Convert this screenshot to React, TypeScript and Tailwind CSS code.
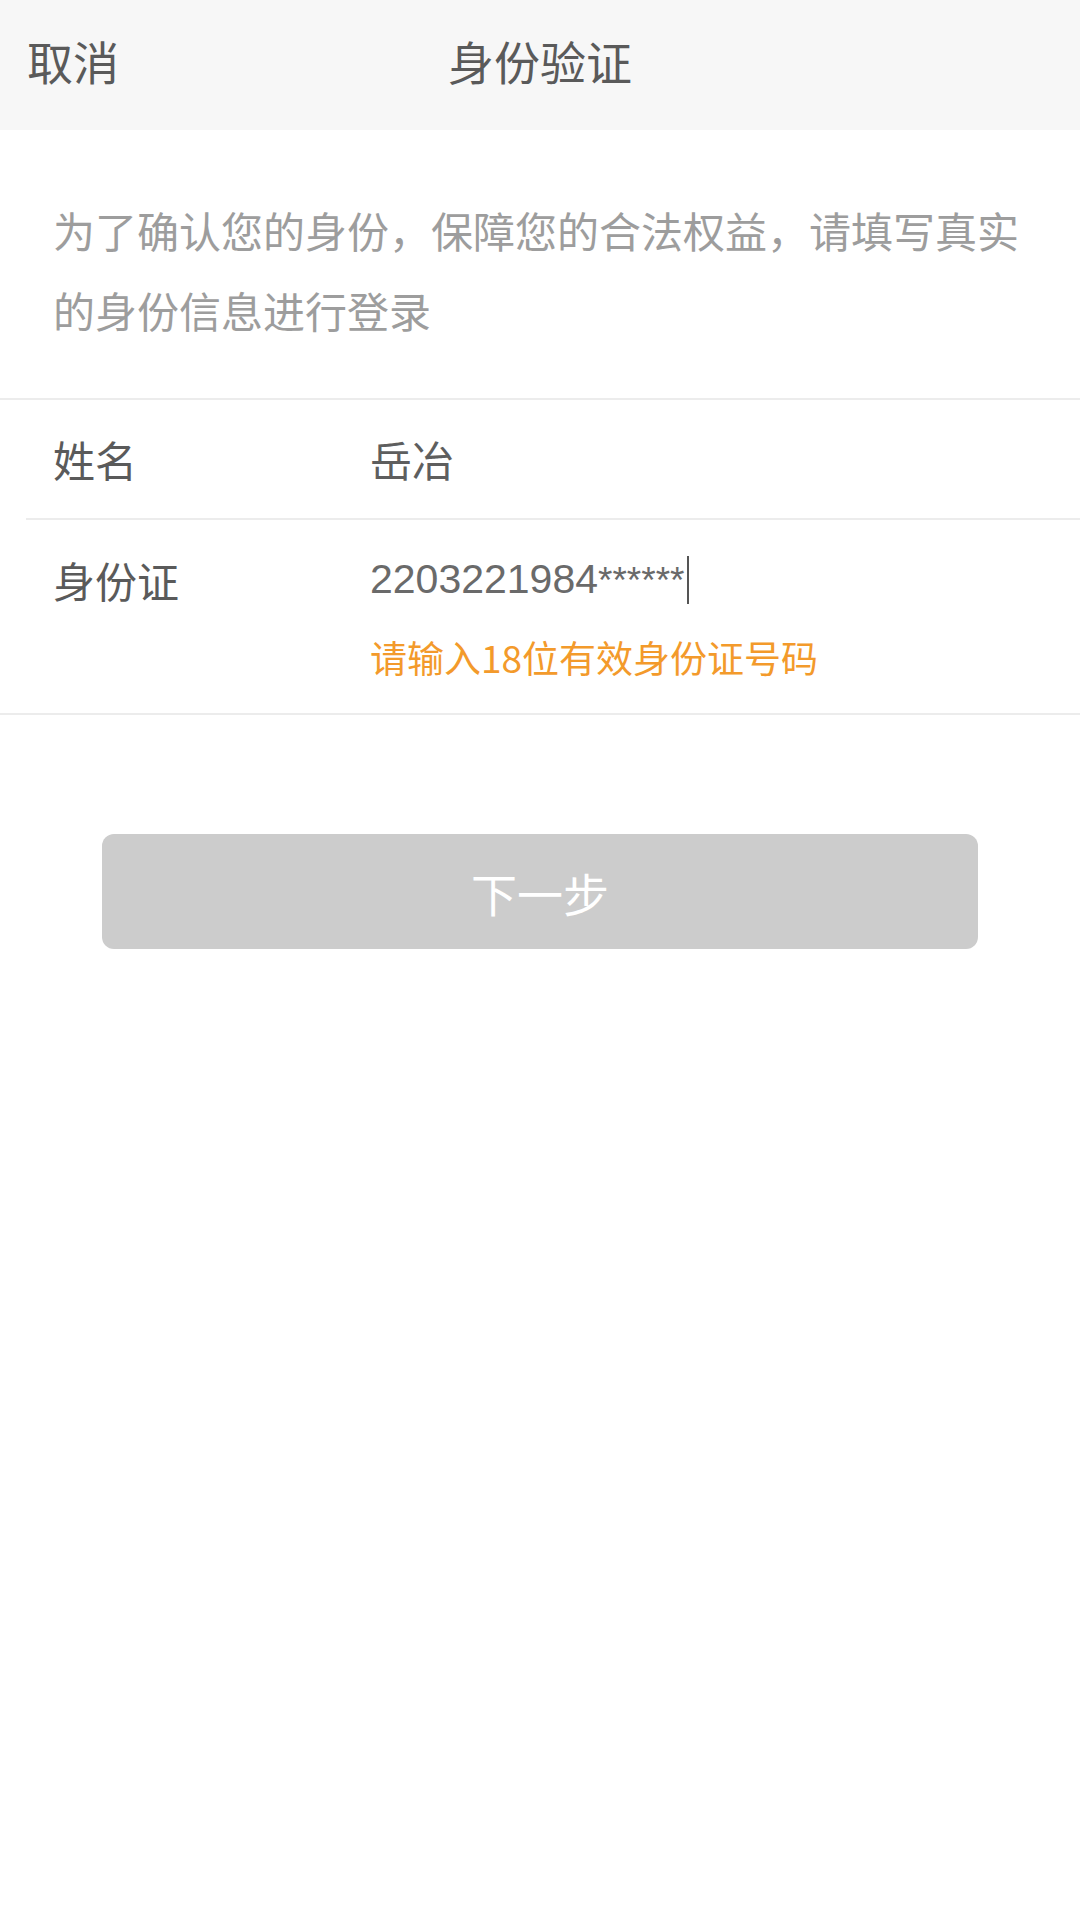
import React from "react";

const cjk = { fontFamily: '"Noto Sans CJK SC", "Noto Sans", sans-serif' };
const num = { fontFamily: '"Liberation Sans", "Noto Sans CJK SC", sans-serif' };

export default function App() {
  return (
    <div className="w-[1080px] min-h-[1920px] bg-white flex flex-col" style={cjk}>
      {/* Header */}
      <div className="relative h-[130px] bg-[#f7f7f7] flex items-center pb-[10px]">
        <span className="pl-[27px] text-[46px] leading-[56px] text-[#5a5a5a]">取消</span>
        <span className="absolute left-0 right-0 top-0 bottom-0 flex items-center justify-center pb-[10px] pointer-events-none">
          <span className="text-[46px] leading-[56px] text-[#5a5a5a]">身份验证</span>
        </span>
      </div>

      {/* Intro */}
      <div className="pt-[60px] pb-[48px] px-[53px]">
        <p className="text-[42px] leading-[80px] text-[#9d9d9d]">
          为了确认您的身份，保障您的合法权益，请填写真实的身份信息进行登录
        </p>
      </div>

      <div className="h-[2px] bg-[#ececec]" />

      {/* Name row */}
      <div className="h-[118px] flex items-center pl-[53px]">
        <span className="w-[317px] text-[42px] leading-[48px] text-[#5a5a5a]">姓名</span>
        <span className="text-[42px] leading-[48px] text-[#5e5e5e]">岳冶</span>
      </div>

      <div className="ml-[26px] h-[2px] bg-[#ececec]" />

      {/* ID row */}
      <div className="flex pl-[53px] pt-[36px] pb-[34px]">
        <span className="w-[317px] text-[42px] leading-[48px] text-[#5a5a5a]">身份证</span>
        <div className="flex flex-col">
          <div className="flex items-center h-[48px]">
            <span className="text-[41px] leading-[48px] text-[#6a6a6a]" style={num}>
              2203221984<span className="text-[37px]">******</span>
            </span>
            <span className="ml-[3px] w-[2px] h-[48px] bg-[#555555]" />
          </div>
          <span className="mt-[31px] text-[37px] leading-[44px] text-[#f39a2b]">
            请输入18位有效身份证号码
          </span>
        </div>
      </div>

      <div className="h-[2px] bg-[#ececec]" />

      {/* Button */}
      <div className="pt-[119px] px-[102px]">
        <div className="h-[115px] rounded-[12px] bg-[#cccccc] flex items-center justify-center">
          <span className="text-[46px] leading-[56px] text-white">下一步</span>
        </div>
      </div>
    </div>
  );
}
